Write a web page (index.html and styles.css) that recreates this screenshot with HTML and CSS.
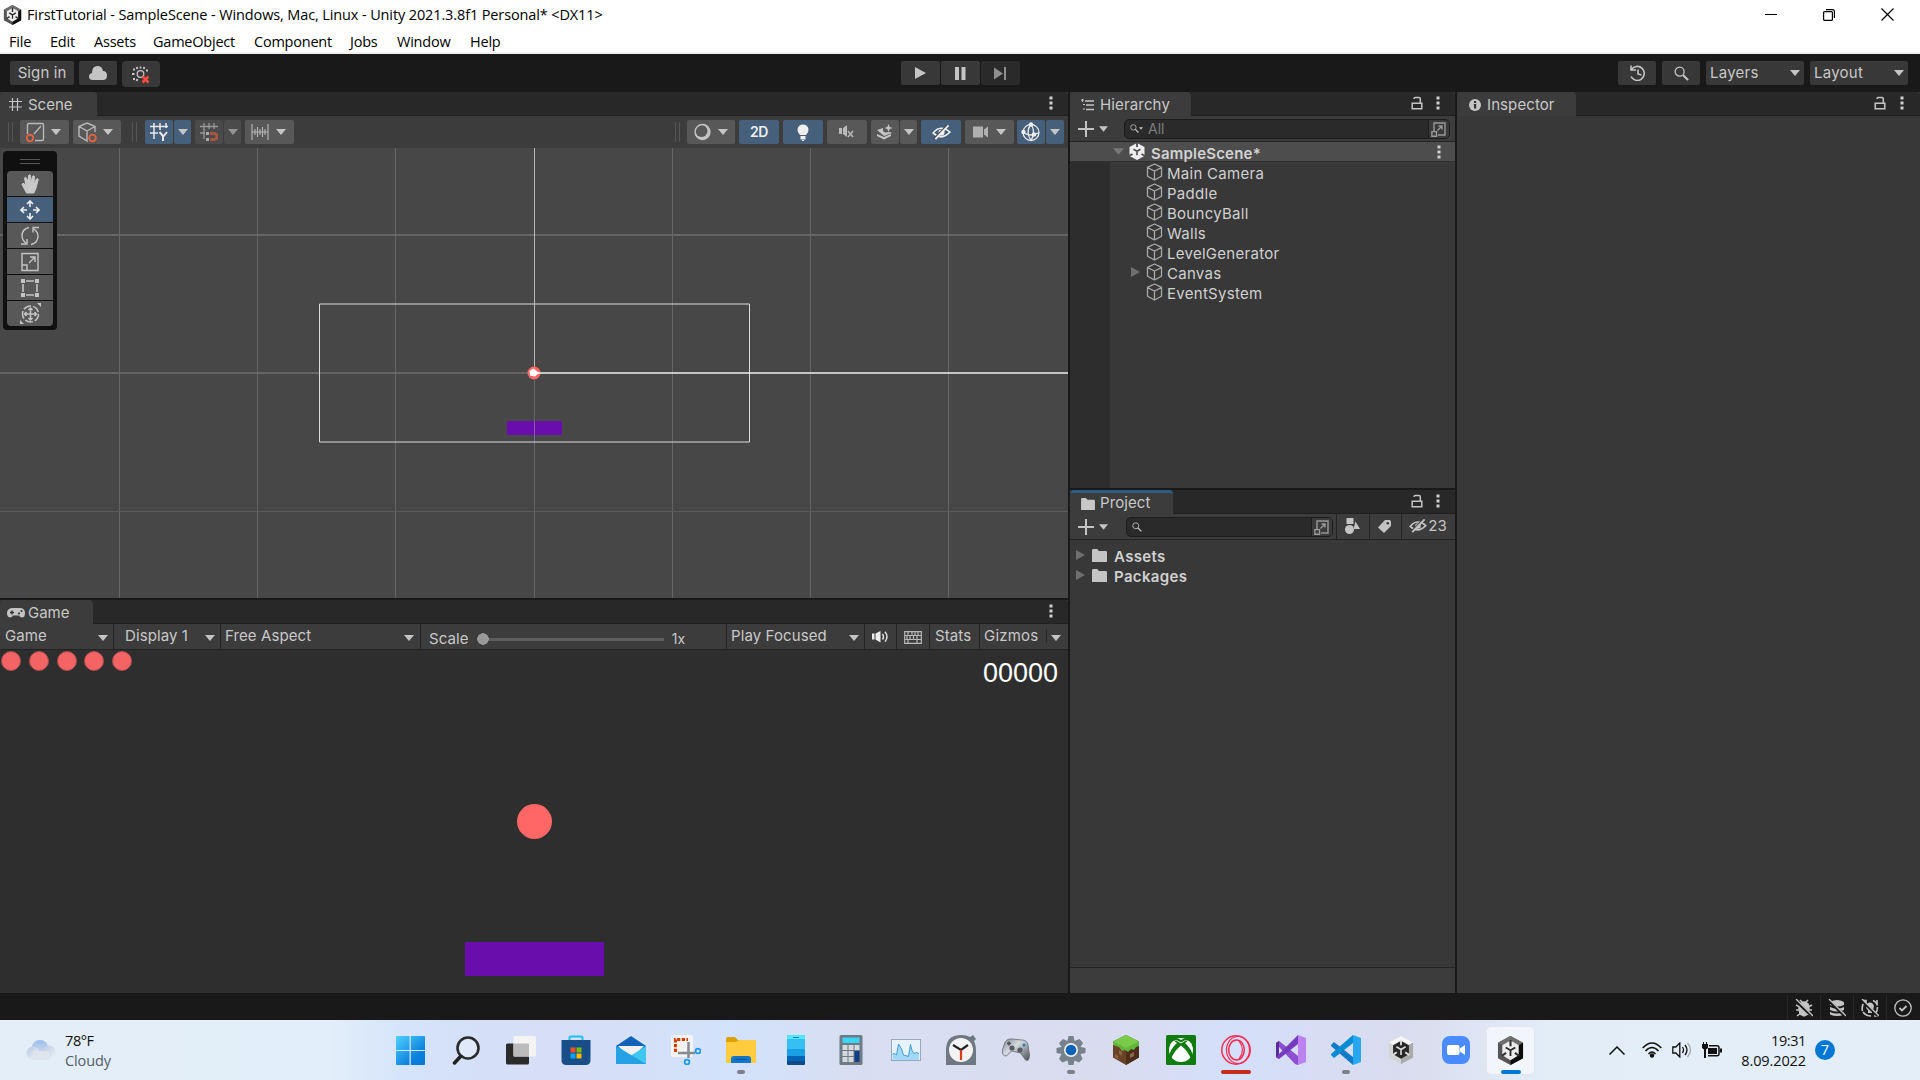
FILE: index.html
```html
<!DOCTYPE html>
<html lang="en">
<head>
<meta charset="utf-8">
<title>FirstTutorial - SampleScene - Unity</title>
<link rel="stylesheet" href="styles.css">
</head>
<body>
<svg class="sprite" aria-hidden="true">
  <defs>
    <symbol id="caret" viewBox="0 0 10 6"><path d="M0 0h10L5 6z" fill="currentColor"/></symbol>
    <symbol id="kebab" viewBox="0 0 4 14"><path d="M.5.5h3v3h-3zM.5 5.5h3v3h-3zM.5 10.5h3v3h-3z" fill="currentColor"/></symbol>
    <symbol id="lock" viewBox="0 0 12 14"><path d="M1.2 7.2h9.6v5.6H1.2zM9.3 7V2.8Q9.3 1.5 8 1.5H4.2Q3 1.5 3 3" fill="none" stroke="currentColor" stroke-width="1.5"/></symbol>
    <symbol id="plus" viewBox="0 0 16 16"><path d="M8 0v16M0 8h16" stroke="currentColor" stroke-width="2"/></symbol>
    <symbol id="folder" viewBox="0 0 15 13"><path d="M0 1.2Q0 0 1.2 0h4l1.8 2h6.8Q15 2 15 3.2V13H0z" fill="currentColor"/></symbol>
    <symbol id="cube" viewBox="0 0 17 18"><path d="M8.5 1l7 3.4v8.800l-7 3.800-7-3.800V4.400zM1.500 4.600l7 3.400 7-3.400M8.500 8v9" fill="none" stroke="currentColor" stroke-width="1.300" stroke-linejoin="round"/></symbol>
    <symbol id="expand" viewBox="0 0 16 16"><path d="M3 10V2h11v12H7M.9 10.6h4.600v4.600H.9zM6.500 9.500L11 5M7.500 5H11v3.500" fill="none" stroke="currentColor" stroke-width="1.400"/></symbol>
    <symbol id="search" viewBox="0 0 16 16"><circle cx="6" cy="6" r="4.800" fill="none" stroke="currentColor" stroke-width="1.400"/><path d="M9.500 9.500L15 15" stroke="currentColor" stroke-width="2.200"/></symbol>
    <symbol id="unity" viewBox="0 0 28 30"><path d="M14 0l13 7v16l-13 7L1 23V7z" fill="#555"/><path d="M14 0l13 7-13 8L1 7z" fill="#6e6e6e"/><path d="M14 15l13-8v16l-13 7z" fill="#0c0c0c"/><path d="M14 4.500l8.500 5v10.500L14 25l-8.500-5V9.500z" fill="#ececec"/><path d="M14 4v6.500M5 20.500l4.500-3M23 20.500l-4.500-3" stroke="#333" stroke-width="2.200"/><path d="M14 14.800v6M14 14.800l-5-3M14 14.800l5-3" stroke="#2a2a2a" stroke-width="1.900"/></symbol>
    <symbol id="eyeoff" viewBox="0 0 20 16"><path d="M1 8.500Q9-1 19 7.500 10 17 1 8.500z" fill="none" stroke="currentColor" stroke-width="1.800"/><circle cx="10" cy="8" r="3.200" fill="currentColor"/><path d="M16.200 0L2.200 14" stroke="#46494d" stroke-width="1.500"/><path d="M17.500 .5L3.500 15" stroke="currentColor" stroke-width="2"/></symbol>
  </defs>
</svg>

<header class="titlebar">
  <svg class="app-icon" width="19" height="20"><use href="#unity"/></svg>
  <span class="title">FirstTutorial - SampleScene - Windows, Mac, Linux - Unity 2021.3.8f1 Personal* &lt;DX11&gt;</span>
  <div class="window-controls">
    <svg width="12" height="12"><path d="M0 5.500h12" stroke="#000"/></svg>
    <svg width="12" height="12" fill="none" stroke="#000" stroke-width="1.200"><rect x=".6" y="2.600" width="8.800" height="8.800" rx="1"/><path d="M3 .6h6.400q2 0 2 2V9"/></svg>
    <svg width="13" height="13"><path d="M.5.5l12 12M12.500.5l-12 12" stroke="#000" stroke-width="1.200"/></svg>
  </div>
</header>

<nav class="menubar">
  <span>File</span><span>Edit</span><span>Assets</span><span>GameObject</span><span>Component</span><span>Jobs</span><span>Window</span><span>Help</span>
</nav>

<div class="app-toolbar">
  <div class="tb-group account">
    <button class="tb-btn signin">Sign in</button>
    <button class="tb-btn w38"><svg width="18" height="14"><path d="M4 14Q0 14 0 10.500 0 7.500 3 7 3 0 8.500 0 13 0 14 5q4 0 4 4.500T14 14z" fill="#c4c4c4"/></svg></button>
    <button class="tb-btn w38 tall"><svg width="19" height="19"><circle cx="8.500" cy="9" r="3.300" fill="none" stroke="#c4c4c4" stroke-width="1.300"/><path d="M1 4.500h2M0 9h2.500M1 14h2M4.500 2l1 2M12.500 2l-1 2M4.500 16l1-2M14 5.500h2M8.500 1.500v2" stroke="#c4c4c4" stroke-width="1.800"/><path d="M10.500 11.500l6 6M16.500 11.500l-6 6" stroke="#ff4b3e" stroke-width="2.600"/></svg></button>
  </div>
  <div class="tb-group playback">
    <button class="tb-btn w39"><svg width="11" height="12"><path d="M0 0l11 6-11 6z" fill="#c4c4c4"/></svg></button>
    <button class="tb-btn w39"><svg width="11" height="13"><path d="M0 0h4v13H0zM6.500 0h4v13h-4z" fill="#c4c4c4"/></svg></button>
    <button class="tb-btn w39 off"><svg width="12" height="13"><path d="M0 .5l9 6-9 6zM10 0h2v13h-2z" fill="#8f8f8f"/></svg></button>
  </div>
  <div class="tb-group views">
    <button class="tb-btn w38"><svg width="17" height="16" fill="none" stroke="#c4c4c4" stroke-width="1.600"><path d="M2.500 4.500A7 7 0 1 1 2 11.500M2 .5v4.500h5M9 4.500V9l3.500 1"/></svg></button>
    <button class="tb-btn w38"><svg width="15" height="15" class="lit"><use href="#search"/></svg></button>
    <button class="tb-btn select">Layers<svg class="caret"><use href="#caret"/></svg></button>
    <button class="tb-btn select">Layout<svg class="caret"><use href="#caret"/></svg></button>
  </div>
</div>

<main class="workspace">
  <div class="column left-column">
    <section class="panel scene-panel">
      <div class="tabs">
        <div class="tab scene-tab"><svg width="13" height="13"><path d="M3.500 0v13M8.500 0v13M0 3.500h13M0 9h13" stroke="#c4c4c4" stroke-width="1.200"/></svg>Scene</div>
        <svg class="kebab end-kebab"><use href="#kebab"/></svg>
      </div>
      <div class="scene-toolbar">
        <i class="grip"></i>
        <button class="st w49 menu"><svg width="20" height="21" fill="none"><path d="M1.500 12V3q0-1.500 1.500-1.500h13Q17.500 1.500 17.500 3v14q0 1.500-1.500 1.500H9M8 12l7-8" stroke="#b8b8b8" stroke-width="1.400"/><circle cx="4" cy="16" r="3.300" stroke="#e8633e" stroke-width="1.800"/></svg><svg class="caret"><use href="#caret"/></svg></button>
        <button class="st w48 menu"><svg width="20" height="21" fill="none"><path d="M9 1l8 3.500V10M9 1L1 4.500V14l8 5V9L1 4.500M9 9l8-4.500" stroke="#b8b8b8" stroke-width="1.400"/><circle cx="14.500" cy="16" r="3.300" stroke="#e8633e" stroke-width="1.800"/></svg><svg class="caret"><use href="#caret"/></svg></button>
        <i class="grip second"></i>
        <div class="split blue"><button class="st w28"><svg width="18" height="20" fill="none" stroke="#e8e8e8"><path d="M4 1v16M10 1v7M16 1v5M0 4.500h18M0 11h8" stroke-width="1.500"/><path d="M9.500 10l3.500 4v5M17 10l-4 5" stroke-width="2"/></svg></button><button class="st w17"><svg class="caret"><use href="#caret"/></svg></button></div>
        <div class="split dim"><button class="st w28"><svg width="18" height="20" fill="none"><path d="M4 1v16M9 1v6M14 1v6M0 4.500h18M0 11h5" stroke="#999" stroke-width="1.300"/><path d="M10 11.500h4q3 0 3 3t-3 3h-4" stroke="#a75642" stroke-width="3"/><path d="M6 11.500h3M6 17.500h3" stroke="#aaa" stroke-width="3"/></svg></button><button class="st w17"><svg class="caret"><use href="#caret"/></svg></button></div>
        <button class="st w49 snap"><svg width="18" height="18"><path d="M1 1v16M17 1v16M4 6v6M6.500 4v10M9 6v6M11.500 4v10M14 6v6M1 9h16" stroke="#b8b8b8" stroke-width="1.100"/></svg><svg class="caret"><use href="#caret"/></svg></button>
        <span class="spring"></span>
        <i class="grip right-grip"></i>
        <button class="st w48"><svg width="18" height="18"><circle cx="8.500" cy="9" r="7.500" fill="#c4c4c4"/><circle cx="7.500" cy="8" r="6" fill="#585858"/><circle cx="8.500" cy="9" r="7.500" fill="none" stroke="#c4c4c4" stroke-width="1.300"/></svg><svg class="caret"><use href="#caret"/></svg></button>
        <button class="st w40 on label2d">2D</button>
        <button class="st w40 on"><svg width="12" height="17" fill="#eee"><path d="M3 11Q0 8 .5 5 1.500.5 6 .5t5.500 4.500Q12 8 9 11zM3.500 12h5v3.500h-5zM5 16h2v1H5z"/></svg></button>
        <button class="st w40"><svg width="16" height="14"><path d="M0 3h3v6H0zM4 3l4-3v12L4 9z" fill="#b8b8b8"/><path d="M9 6l5 6M14 6l-5 6" stroke="#b8b8b8" stroke-width="1.500"/></svg></button>
        <div class="split"><button class="st w28"><svg width="16" height="16"><path d="M0 6l6-2v3l2 1.500 5-.5 2 1-8 3zM0 10l7 3 7-3v2l-7 3.500L0 12z" fill="#c4c4c4"/><path d="M11.500 0l1.200 3 3 1-3 1-1.200 3-1.200-3-3-1 3-1z" fill="#c4c4c4"/></svg></button><button class="st w17"><svg class="caret"><use href="#caret"/></svg></button></div>
        <button class="st w40 on"><svg width="19" height="15"><use href="#eyeoff"/></svg></button>
        <button class="st w49"><svg width="17" height="12"><path d="M0 .5h10v11H0zM11 3.500l4-3v11l-4-3z" fill="#b0b0b0"/></svg><svg class="caret"><use href="#caret"/></svg></button>
        <div class="split blue last"><button class="st w28"><svg width="20" height="20" fill="none" stroke="#e8e8e8" stroke-width="1.300"><circle cx="10" cy="10.500" r="8"/><path d="M10 2q-6 8 0 16.500M2 10.500q8 5 16 0M10 2q5 8 0 16.500"/><g fill="#eee" stroke="none"><circle cx="10" cy="2.500" r="2.200"/><circle cx="2.500" cy="10" r="2.200"/><circle cx="13" cy="12.500" r="2.200"/></g></svg></button><button class="st w18"><svg class="caret"><use href="#caret"/></svg></button></div>
      </div>
      <div class="scene-view">
        <svg class="scene-canvas" width="1068" height="450">
          <g stroke="#656565" shape-rendering="crispEdges">
            <path d="M119.500 0v450M672.500 0v450M810.500 0v450M948.500 0v450M534.500 225v225"/>
            <path d="M257.500 0v450M395.500 0v450M0 87h1068M0 225h534" stroke-width="1.500"/>
            <path d="M0 363.500h1068" stroke="#5b5b5b"/>
          </g>
          <path d="M319.500 156h430v138h-430z" fill="none" stroke="#dcdcdc"/>
          <rect x="507" y="273" width="55" height="14" fill="#6a0dad"/>
          <path d="M534.500 0v220" stroke="#b9b9b9" shape-rendering="crispEdges"/>
          <path d="M534.500 273v20" stroke="#8a5ab0"/>
          <circle cx="534" cy="225" r="6.500" fill="#ff6666"/>
          <path d="M534 225h534" stroke="#eee" stroke-width="1.500"/>
          <path d="M529.500 223l4-2.500 5.500 4.500-4 3.500-5-1z" fill="#fff"/>
        </svg>
        <div class="tools">
          <i class="tools-grip"></i>
          <button><svg width="19" height="20"><path d="M5.500 19L1 10.500q0-1.500 2-1L5 12 3.500 4q1-1.500 2 0L7.500 9V1.500q1-1.500 2 0L10 9l1.500-6.500q1-1.500 2 0L13 10l2.500-5q1.500-1 1.800.5L15 14l-2 5z" fill="#c8c8c8" stroke="#c8c8c8"/></svg></button>
          <button class="on"><svg width="20" height="20" fill="none" stroke="#eee" stroke-width="1.600"><path d="M10 7V1M7 4l3-3 3 3M10 13v6M7 16l3 3 3-3M7 10H1M4 7l-3 3 3 3M13 10h6M16 7l3 3-3 3"/></svg></button>
          <button><svg width="20" height="20" fill="none" stroke="#c4c4c4" stroke-width="1.400"><path d="M9 1.500Q2 3 2 10q0 4 4 7M1 18h6v-5M11 18.500q7-1.500 7-8.500 0-4-4-7M19 1.500h-6v5"/></svg></button>
          <button><svg width="20" height="20" fill="none" stroke="#c4c4c4" stroke-width="1.400"><path d="M2 1.500h16v17H2zM2 13h5v5.500M9 11l6-6M10 5h5v5"/></svg></button>
          <button><svg width="20" height="20" stroke="#c4c4c4" stroke-width="1.600"><path d="M6 3h8M6 17h8M3 6v8M17 6v8"/><path d="M1 1h4v4H1zM15 1h4v4h-4zM1 15h4v4H1zM15 15h4v4h-4z" fill="#c4c4c4" stroke="none"/></svg></button>
          <button><svg width="21" height="21" fill="none" stroke="#c4c4c4" stroke-width="1.500"><circle cx="10.500" cy="11" r="8" stroke-dasharray="8 2"/><path d="M10.500 5v12M4.500 11h12M8.500 7l2-2 2 2M8.500 15l2 2 2-2M6.500 9l-2 2 2 2M14.500 9l2 2-2 2"/><path d="M17 0h4v4zM0 17v4h4z" fill="#c4c4c4" stroke="none"/></svg></button>
        </div>
      </div>
    </section>

    <section class="panel game-panel">
      <div class="tabs">
        <div class="tab game-tab"><svg width="18" height="11"><path d="M4.500 1h9Q18 1.500 18 6t-3 4.500q-2 0-3-2H6q-1 2-3 2Q0 10 0 6t4.500-5z" fill="#c4c4c4"/><path d="M3 5.500h4M5 3.500v4" stroke="#333" stroke-width="1.400"/><circle cx="12" cy="6.500" r="1.100" fill="#333"/><circle cx="14.500" cy="4" r="1.100" fill="#333"/></svg>Game</div>
        <svg class="kebab end-kebab"><use href="#kebab"/></svg>
      </div>
      <div class="game-toolbar">
        <span class="g-mode">Game<svg class="caret"><use href="#caret"/></svg></span>
        <span class="g-display">Display 1<svg class="caret"><use href="#caret"/></svg></span>
        <span class="g-aspect">Free Aspect<svg class="caret"><use href="#caret"/></svg></span>
        <span class="g-scale">Scale<i class="slider"></i><b>1x</b></span>
        <span class="g-play">Play Focused<svg class="caret"><use href="#caret"/></svg></span>
        <span class="g-icon"><svg width="17" height="12"><path d="M0 2.500h2.500v6H0zM3.500 2.500L8.500 0v11.500l-5-3z" fill="#eee"/><path d="M10.500 3q2 3 0 5.500M13 .8q4 5 0 10" stroke="#ddd" stroke-width="1.500" fill="none"/></svg></span>
        <span class="g-icon"><svg width="18" height="13" fill="none" stroke="#b8b8b8" stroke-width="1.200"><path d="M.7.7h16.600v11.600H.7zM1 4.500h16M1 8.500h16M4 1v3.500M8 1v3.500M11 1v3.500M14 1v3.500M3 5v3.500M6 5v3.500M9.500 5v3.500M13 5v3.500M4 9v3.500M13 9v3.500"/></svg></span>
        <span class="g-stats">Stats</span>
        <span class="g-gizmos">Gizmos<i></i><svg class="caret"><use href="#caret"/></svg></span>
      </div>
      <div class="game-view">
        <div class="hud">
          <div class="lives"><i></i><i></i><i></i><i></i><i></i></div>
          <div class="score">00000</div>
        </div>
        <div class="ball"></div>
        <div class="paddle"></div>
      </div>
    </section>
  </div>

  <div class="column mid-column">
    <section class="panel hierarchy-panel">
      <div class="tabs">
        <div class="tab hier-tab"><svg width="14" height="12"><path d="M4 2h9M5 6h8M5 10.500h8" stroke="#c4c4c4" stroke-width="1.300"/><path d="M0 1h3M1.500 0v3M2 5.500h2M2 10h2" stroke="#c4c4c4"/></svg>Hierarchy</div>
        <svg class="lock"><use href="#lock"/></svg><svg class="kebab"><use href="#kebab"/></svg>
      </div>
      <div class="list-toolbar">
        <svg class="plus"><use href="#plus"/></svg><svg class="caret"><use href="#caret"/></svg>
        <div class="searchbox hier-search"><svg width="9" height="9"><use href="#search"/></svg><svg class="mini"><use href="#caret"/></svg><span>All</span><div class="picker"><svg width="16" height="16"><use href="#expand"/></svg></div></div>
      </div>
      <div class="scene-row"><svg class="tri-down"><use href="#caret"/></svg>
        <svg width="16" height="17"><path d="M8 0l7.500 4v9L8 17 .5 13V4z" fill="#eee"/><path d="M8 8.200v4M8 8.200L4.500 6.300M8 8.200l3.500-1.900" stroke="#4d4d4d" stroke-width="1.600"/><path d="M8 0v4M0 13l3.500-2M16 13l-3.500-2" stroke="#4d4d4d" stroke-width="1.800"/></svg>
        <span>SampleScene*</span><svg class="kebab"><use href="#kebab"/></svg></div>
      <div class="tree">
        <div class="gutter"></div>
        <ul class="objects">
          <li><svg><use href="#cube"/></svg><span>Main Camera</span></li>
          <li><svg><use href="#cube"/></svg><span>Paddle</span></li>
          <li><svg><use href="#cube"/></svg><span>BouncyBall</span></li>
          <li><svg><use href="#cube"/></svg><span>Walls</span></li>
          <li><svg><use href="#cube"/></svg><span>LevelGenerator</span></li>
          <li class="parent"><svg><use href="#cube"/></svg><span>Canvas</span></li>
          <li><svg><use href="#cube"/></svg><span>EventSystem</span></li>
        </ul>
      </div>
    </section>
    <section class="panel project-panel">
      <div class="tabs">
        <div class="tab proj-tab focused"><svg width="14" height="12"><use href="#folder"/></svg><span>Project</span></div>
        <svg class="lock"><use href="#lock"/></svg><svg class="kebab"><use href="#kebab"/></svg>
      </div>
      <div class="list-toolbar project-toolbar">
        <svg class="plus"><use href="#plus"/></svg><svg class="caret"><use href="#caret"/></svg>
        <div class="searchbox proj-search"><svg width="10" height="10"><use href="#search"/></svg><div class="picker"><svg width="16" height="16"><use href="#expand"/></svg></div></div>
        <span class="p-cell p-first"><svg width="15" height="17" fill="#c4c4c4"><path d="M1.500 0h7v6h-7zM10.500 3.500L15 11H8.500z"/><circle cx="4.500" cy="11.500" r="4.500"/></svg></span>
        <span class="p-cell p-tag"><svg width="13" height="13"><path d="M7 0h4.500Q13 0 13 1.500V6l-7 7-6-5.500z" fill="#c4c4c4"/><circle cx="9.800" cy="3.200" r="1.300" fill="#3c3c3c"/></svg></span>
        <span class="p-cell p-hidden"><svg width="18" height="14"><use href="#eyeoff"/></svg>23</span>
      </div>
      <ul class="assets">
        <li><svg width="15" height="13"><use href="#folder"/></svg><span>Assets</span></li>
        <li><svg width="15" height="13"><use href="#folder"/></svg><span>Packages</span></li>
      </ul>
      <div class="project-footer"></div>
    </section>
  </div>

  <section class="panel inspector-panel">
    <div class="tabs">
      <div class="tab insp-tab"><svg width="12" height="12"><circle cx="6" cy="6" r="6" fill="#c4c4c4"/><path d="M5 2h2.200v2H5zM4.500 5h2.700v4.500H5V6.200z" fill="#333"/></svg>Inspector</div>
      <svg class="lock"><use href="#lock"/></svg><svg class="kebab"><use href="#kebab"/></svg>
    </div>
  </section>
</main>

<footer class="statusbar">
  <span><svg width="18" height="18"><path d="M5 5q4-4 8 0l1 4-1 6-4 2-4-2-1-6zM5 1l3 3M13 1l-3 3M1 6l4 2M1 11h4M2 17l4-3M17 6l-4 2M17 11h-4M16 17l-4-3" fill="#c4c4c4" stroke="#c4c4c4" stroke-width="1.500"/><path d="M0 1l17 16" stroke="#191919" stroke-width="3"/><path d="M1 0l17 17" stroke="#c4c4c4" stroke-width="1.300"/></svg></span>
  <span><svg width="18" height="18"><path d="M2 3q7-4 14 0v3q-7 3-14 0zM2 8q7 3 14 0v3q-7 3-14 0zM2 13q7 3 14 0v2.500q-7 3-14 0z" fill="#c4c4c4"/><path d="M0 1l17 16" stroke="#191919" stroke-width="3"/><path d="M1 0l17 17" stroke="#c4c4c4" stroke-width="1.300"/></svg></span>
  <span><svg width="18" height="18"><path d="M1.500 12Q0 7 4 2.500M12 1.500q3 1 4.500 5M2 13q3 4 8 4M16.500 8q0 4-2 6M1 1.500h4v4M16 1v4M13 17h4" fill="none" stroke="#c4c4c4" stroke-width="1.600"/><path d="M5 7q1-3.500 4-3.500T13 7q0 3-2 4v3H7v-3Q5 10 5 7z" fill="#c4c4c4"/><path d="M0 1l17 16" stroke="#191919" stroke-width="2.500"/><path d="M1 0l17 17" stroke="#c4c4c4" stroke-width="1.300"/></svg></span>
  <span><svg width="18" height="18" fill="none" stroke="#c4c4c4"><circle cx="9" cy="9" r="8.200" stroke-width="1.300"/><path d="M5.500 9L8 11.500 12.500 7" stroke-width="1.800"/></svg></span>
</footer>

<div class="taskbar">
  <div class="weather">
    <svg width="30" height="20"><defs><linearGradient id="cl" x2="0" y2="1"><stop stop-color="#9bbcec"/><stop offset="1" stop-color="#dce3ee"/></linearGradient><linearGradient id="cl2" x2="1" y2="1"><stop stop-color="#b5c9e4"/><stop offset="1" stop-color="#f2f3f6"/></linearGradient></defs><circle cx="14" cy="8.500" r="8.500" fill="url(#cl)"/><circle cx="7" cy="13" r="6.500" fill="url(#cl2)"/><circle cx="23" cy="12.500" r="7" fill="url(#cl2)"/><path d="M7 11h16v9H7z" fill="#dfe5ee"/></svg>
    <div><p>78°F</p><p class="muted">Cloudy</p></div>
  </div>
  <div class="apps">
    <span><svg width="30" height="30"><defs><linearGradient id="win" gradientUnits="userSpaceOnUse" x1="0" y1="0" x2="28" y2="30"><stop stop-color="#4fd3ff"/><stop offset=".7" stop-color="#0d83de"/><stop offset="1" stop-color="#0078d4"/></linearGradient></defs><path d="M0 2q0-1 1-1h12.500v14H0zM14.800 1H28q1 0 1 1v13H14.800zM0 16h13.500v14H1q-1 0-1-1zM14.800 16H29v13q0 1-1 1H14.800z" fill="url(#win)"/></svg></span>
    <span><svg width="30" height="30"><circle cx="17" cy="13" r="10.500" fill="#f6f8fc" fill-opacity=".35" stroke="#2b2b2b" stroke-width="2.600"/><path d="M9.500 21.500L3.500 28" stroke="#222" stroke-width="3.500" stroke-linecap="round"/></svg></span>
    <span><svg width="30" height="30"><rect y="8.500" width="23" height="21" rx="1.500" fill="#2b2b2b"/><rect x="7.500" y="1" width="22.500" height="20.500" rx="1.500" fill="#f4f4f4"/><path d="M7.500 8.500H23v13H7.500z" fill="#bcbcbc"/></svg></span>
    <span><svg width="30" height="30"><path d="M8.500 7V3q0-1.500 1.500-1.500h10q1.500 0 1.500 1.500v4" fill="none" stroke="#22c1f5" stroke-width="2"/><path d="M.5 5h29v20q0 5-5 5h-19q-5 0-5-5z" fill="#184f8b"/><path d="M9.500 12.500h5v5h-5z" fill="#f25022"/><path d="M15.500 12.500h5v5h-5z" fill="#7fba00"/><path d="M9.500 18.500h5v5h-5z" fill="#00a4ef"/><path d="M15.500 18.500h5v5h-5z" fill="#ffb900"/></svg></span>
    <span><svg width="30" height="30"><path d="M0 11L15 1l15 10v5H0z" fill="#0f64b7"/><path d="M2 11h26L15 24z" fill="#f1f1f1"/><path d="M0 11l15 9.500V29H0z" fill="#1d9ae0"/><path d="M30 11L15 20.500 8 29h22z" fill="#40c7f0"/><path d="M15 20L30 29H0V11z" fill="#25a2e5"/></svg></span>
    <span><svg width="30" height="30"><rect width="22" height="22" rx="2" fill="#f4f3f2"/><path d="M4.500 17V4.500H17" fill="none" stroke="#d83b01" stroke-width="3" stroke-dasharray="3.200 1.500"/><path d="M17.500 7v16M7 18h17" stroke="#858a90" stroke-width="2.500"/><circle cx="27" cy="16" r="2.400" fill="none" stroke="#1e9be9" stroke-width="1.800"/><circle cx="16" cy="27" r="2.400" fill="none" stroke="#1e9be9" stroke-width="1.800"/></svg></span>
    <span class="run"><svg width="30" height="30"><path d="M0 4q0-2 2-2h7l3 3h18v10H0z" fill="#dfa006"/><path d="M0 7h10l3-2h17v22q0 1-1 1H1q-1 0-1-1z" fill="#ffcb3f"/><path d="M5 28v-4q0-3 3-3h14q3 0 3 3v4z" fill="#1377c8"/><path d="M9 24.500h12" stroke="#0b5394"/></svg></span>
    <span><svg width="30" height="30"><rect x="6" width="18" height="30" rx="1.500" fill="#1a9fe5"/><path d="M6 1.500Q6 0 7.500 0h15Q24 0 24 1.500V14H6z" fill="#36bff2"/><path d="M6 4V1.500Q6 0 7.500 0h15Q24 0 24 1.500V4z" fill="#50e6ff"/><path d="M6 21h18v5H6z" fill="#0364b8"/><path d="M6 26h18v2.500Q24 30 22.500 30h-15Q6 30 6 28.500z" fill="#114a8b"/><path d="M12 2.500h6" stroke="#1489b4"/></svg></span>
    <span><svg width="30" height="30"><rect x="3.500" width="23" height="30" rx="1.500" fill="#6f7a84"/><path d="M6.500 2.500h17V8h-17z" fill="#3bd5f5"/><path d="M6.500 10h5v5h-5zM12.500 10h5v5h-5zM18.500 10h5v5h-5zM6.500 16h5v5h-5zM12.500 16h5v5h-5zM6.500 22h5v5h-5zM12.500 22h5v5h-5z" fill="#d4dade"/><path d="M18.500 16h5v11h-5z" fill="#123f85"/></svg></span>
    <span><svg width="30" height="30"><rect x=".5" y="4.500" width="29" height="21" fill="#e8f2fa" stroke="#9ba8b5"/><path d="M1.500 25V19l2-.5 2 1.500 2-11 3 5 2 6 5 1.500 2-12 1.500 6 2 3 2.500-1 2.500 1V25z" fill="#a2d8f8"/><path d="M1.500 19l2-.5 2 1.500 2-11 3 5 2 6 5 1.500 2-12 1.500 6 2 3 2.500-1 2.500 1" fill="none" stroke="#3d9ddb"/></svg></span>
    <span><svg width="30" height="30"><path d="M0 30V15Q0 0 15 0t15 15v15zM24 2l3-2 3 4-2 2z" fill="#6d7882"/><circle cx="15" cy="15" r="12" fill="#f3f3f3"/><path d="M7 10l8 5 7-5" fill="none" stroke="#222" stroke-width="2.200"/><path d="M15 15v10" stroke="#dd3b17" stroke-width="2.200"/></svg></span>
    <span><svg width="30" height="30"><defs><linearGradient id="pad" x2="1" y2="1"><stop stop-color="#7e858c"/><stop offset=".4" stop-color="#d5dbe0"/><stop offset="1" stop-color="#4a4f55"/></linearGradient></defs><path d="M4 7q3-4 7-3l10 1q5 0 6 5l1.500 10q0 7-4 5l-5-7-9-2-5 5q-5 0-4-6z" fill="url(#pad)" stroke="#656c74" stroke-width=".8"/><circle cx="11" cy="13" r="2.600" fill="#555c64"/><circle cx="19" cy="15" r="2.600" fill="#555c64"/><circle cx="23" cy="10" r="1.500" fill="#3177b9"/><path d="M6 8.500h4M8 6.500v4" stroke="#474c52" stroke-width="1.500"/></svg></span>
    <span class="run"><svg width="30" height="30"><path d="M11.500 6l1-5h5l1 5 5-2 3.500 4-2.500 4 5 1v5l-5 1 2 5-3.500 3.500-4.500-2-1 4.500h-5l-1-4.500-5 2L3 24l2.500-5-5-1v-5l5-1L3 8l4-4z" fill="#77818b"/><circle cx="15" cy="15" r="7" fill="#eee"/><circle cx="15" cy="15" r="5.300" fill="#0c63b8"/></svg></span>
    <span><svg width="30" height="30"><path d="M15 0l13 6.500v16L15 30 2 22.500v-16z" fill="#6a4329"/><path d="M15 13v17l13-7.500v-16z" fill="#4b2d1b"/><path d="M15 0l13 6.500V11l-3 1-2 3-3-1-3 3-3-2-3 1-3-4-6-2V6.500z" fill="#63b53b"/><path d="M15 0l13 6.500L15 13 2 6.500z" fill="#7acb4c"/><path d="M8 15l3 2v4l-3-2zM19 19l4-2v4l-4 2zM4 19l3 2v3l-3-2z" fill="#916444"/></svg></span>
    <span><svg width="30" height="30"><rect width="30" height="30" rx="1.500" fill="#107c10"/><circle cx="15" cy="15" r="12" fill="#fff"/><path d="M5 7Q8 3 15 7.500 22 3 25 7L22 3.500Q18 2.500 15 5 12 2.500 8 3.500z" fill="#107c10"/><path d="M15 10.500Q7 17 5 24.500L3 22Q4 14 11 8L7 5q4 0 8 3.500Q19 5 23 5l-4 3q7 6 8 14l-2 2.500Q23 17 15 10.500z" fill="#107c10"/></svg></span>
    <span class="run red"><svg width="30" height="30" fill="none" stroke="#f52d52"><circle cx="15" cy="15" r="14.200" stroke-width="1.500"/><ellipse cx="17" cy="15" rx="11.500" ry="13.500" stroke-width="1.200"/><ellipse cx="15.500" cy="15" rx="7.800" ry="10" stroke-width="1.500"/><path d="M18 6q7 9 0 18" stroke-width="1.200"/></svg></span>
    <span><svg width="30" height="30"><path d="M0 8l3-2 19 15V30l-3-1L3 12v7l-3 4z" fill="#8d4ed0"/><path d="M0 8l3-2v18l-3-2z" fill="#5b2a9d"/><path d="M3 24l19-15V0L0 22z" fill="#763bc0"/><path d="M22 0l8 3v24l-8 3z" fill="#bd82f1"/></svg></span>
    <span class="run"><svg width="30" height="30"><path d="M0 10l3-3 19 15v8L0 11z" fill="#1279c4"/><path d="M0 20l3 3L22 8V0L0 19z" fill="#078bd2"/><path d="M22 0l8 3v24l-8 3z" fill="#27a7ef"/></svg></span>
    <span><svg width="26" height="28" viewBox="0 0 28 30"><path d="M14 0l13 7v16l-13 7L1 23V7z" fill="#d4d4d4"/><path d="M14 0l13 7-13 7L1 7z" fill="#f6f6f6"/><path d="M14 14l13-7v16l-13 7z" fill="#aaa"/><path d="M14 5l8.500 5v9.500L14 24.500l-8.500-5V10z" fill="#272727"/><path d="M14 4.500v5.500M5 20.500l4.500-3M23 20.500l-4.500-3" stroke="#ddd" stroke-width="2"/><path d="M14 14.500v6M14 14.500l-5-3M14 14.500l5-3" stroke="#ddd" stroke-width="1.700"/></svg></span>
    <span><svg width="30" height="30"><rect x="1" y="1" width="28" height="28" rx="8" fill="#4a8cff"/><rect x="6" y="10" width="12.500" height="10" rx="2" fill="#fff"/><path d="M19 13.500l5-3.500v10l-5-3.500z" fill="#fff"/></svg></span>
    <span class="run active"><svg width="27" height="29"><use href="#unity"/></svg></span>
  </div>
  <div class="tray">
    <svg width="16" height="9"><path d="M.5 8.500L8 1l7.500 7.500" fill="none" stroke="#111" stroke-width="1.500"/></svg>
    <svg class="wifi" width="20" height="16" fill="none" stroke="#111" stroke-width="1.500"><path d="M.7 6Q10-4 19.300 6M3.500 9Q10 2 16.500 9M6.500 12Q10 8 13.500 12"/><circle cx="10" cy="13.500" r="1.500" fill="#111"/></svg>
    <svg class="vol" width="20" height="16" fill="none" stroke="#111" stroke-width="1.300"><path d="M.8 5h3l4-4v14l-4-4h-3zM10.500 5q2 3 0 6M13 3q4 5 0 10"/><path d="M15.500 1q6 7 0 14" stroke="#aaa"/></svg>
    <svg class="bat" width="21" height="17"><path d="M1 2h6v4L5 7.500v8.500H3V7.500L1 6zM2 0h1v3H2zM5 0h1v3H5z" fill="#111"/><path d="M8 3.700h8q2 0 2 2v6q0 2-2 2H7" fill="none" stroke="#111" stroke-width="1.500"/><path d="M7 6h9v6H7zM19 6.500h2v4h-2z" fill="#111"/></svg>
    <div class="clock"><p>19:31</p><p>8.09.2022</p></div>
    <div class="badge">7</div>
  </div>
</div>
</body>
</html>
```
FILE: styles.css
```css
* { box-sizing: border-box; }
html, body { margin: 0; }
body {
  width: 1920px; height: 1080px; overflow: hidden;
  display: flex; flex-direction: column;
  background: #191919; color: #c8c8c8;
  font: 15px/20px Inter, "Liberation Sans", sans-serif;
}
p, ul { margin: 0; padding: 0; list-style: none; }
svg { display: block; flex: none; }
button { border: 0; padding: 0; font: inherit; color: inherit; display: flex; align-items: center; justify-content: center; }
.sprite { position: absolute; width: 0; height: 0; }
.caret { width: 10px; height: 6px; color: #c4c4c4; }
.kebab { width: 4px; height: 14px; color: #d0d0d0; }
.lock { width: 12px; height: 14px; color: #c4c4c4; }
.lit { color: #c4c4c4; }

/* Window frame */
.titlebar { height: 28px; flex: none; background: #fff; color: #000; display: flex; align-items: center; padding: 1px 26px 0 3px; font: 14.500px/20px "Open Sans", sans-serif; }
.title { margin-left: 5px; letter-spacing: -.12px; white-space: nowrap; }
.window-controls { margin-left: auto; display: flex; align-items: center; gap: 46px; }
.menubar { height: 26px; flex: none; background: #fff; border-bottom: 2px solid #f0f0f0; color: #000; padding: 3px 0 0 9px; display: grid; grid-template-columns: 41px 44px 59px 101px 96px 47px 73px 50px; font: 14.500px/21px "Open Sans", sans-serif; letter-spacing: -.22px; }

/* Main toolbar */
.app-toolbar { height: 38px; flex: none; display: grid; grid-template-columns: 901px 1fr 302px; padding: 7px 0 0; }
.tb-group { display: flex; align-items: flex-start; }
.tb-btn { height: 24px; background: #383838; border-radius: 2px; }
.account { gap: 5px; padding-left: 10px; }
.signin { width: 64px; letter-spacing: .1px; }
.w38 { width: 38px; } .w39 { width: 39px; }
.tall { height: 26px; border-radius: 4px; }
.playback { gap: 1px; }
.playback .off { background: #2a2a2a; }
.playback svg { margin-right: 1px; }
.views { gap: 6px; }
.select { width: 98px; justify-content: space-between; padding: 0 4px; letter-spacing: .25px; }

/* Docked panels */
.workspace { height: 901px; flex: none; display: grid; grid-template-columns: 1068px 385px 463px; gap: 2px; }
.column { display: grid; gap: 2px; min-height: 0; }
.left-column { grid-template-rows: 506px 393px; }
.mid-column { grid-template-rows: 396px 503px; }
.panel { background: #383838; display: flex; flex-direction: column; min-height: 0; min-width: 0; }
.tabs { height: 24px; flex: none; background: #282828; display: flex; align-items: center; border-bottom: 1px solid #202020; border-radius: 4px 4px 0 0; padding-right: 15px; }
.tabs .kebab { margin: 0 0 2px 14px; }
.tabs .lock { margin: 0 0 2px auto; }
.tabs .end-kebab { margin-left: auto; }
.inspector-panel .tabs { padding-right: 16px; }
.mid-column .tabs .kebab { margin-left: 13px; }
.tab { height: 24px; align-self: flex-start; display: flex; align-items: center; background: #3c3c3c; border-radius: 4px 4px 0 0; padding-top: 1px; }
.scene-tab { width: 97px; padding-left: 9px; gap: 6px; }
.game-tab { width: 93px; padding-left: 7px; gap: 3px; }
.hier-tab { width: 121px; padding-left: 11px; gap: 5px; letter-spacing: .15px; }
.proj-tab { width: 103px; padding-left: 11px; gap: 5px; letter-spacing: .1px; }
.insp-tab { width: 119px; padding-left: 12px; gap: 6px; letter-spacing: .1px; }
.focused { border-top: 3px solid #2c5d87; padding-top: 0; }
.focused span { margin-top: -2px; }

/* Scene view */
.scene-toolbar { height: 32px; flex: none; background: #3c3c3c; display: flex; align-items: center; padding: 0 4px 0 8px; gap: 4px; }
.grip { width: 5px; height: 20px; border: solid #555; border-width: 0 1px; margin-right: 3px; }
.grip.second { margin-left: 7px; margin-right: 4px; }
.right-grip { margin-right: 3px; }
.spring { flex: 1; }
.st { height: 24px; background: #585858; border-radius: 2px; gap: 6px; color: #eee; }
.st.menu { gap: 5px; padding-right: 3px; }
.st.snap { padding-right: 2px; gap: 7px; }
.w49 { width: 49px; } .w48 { width: 48px; } .w40 { width: 40px; } .w28 { width: 28px; } .w17 { width: 17px; } .w18 { width: 18px; }
.split { display: flex; gap: 1px; }
.split.last { margin-left: -1px; }
.blue .st, .st.on { background: #46607c; }
.dim .st { background: #4b4b4b; }
.dim .caret { opacity: .6; }
.label2d { font-weight: 600; font-size: 14px; letter-spacing: -.3px; }
.scene-view { height: 450px; position: relative; background: #474747; }
.tools { position: absolute; left: 3px; top: 3px; width: 54px; height: 179px; background: #101010; border-radius: 4px; display: flex; flex-direction: column; align-items: center; gap: 1px; }
.tools-grip { height: 5px; width: 20px; border: solid #555; border-width: 1px 0; margin: 8px 0 6px; }
.tools button { width: 46px; height: 25px; background: #585858; }
.tools button.on { background: #46607c; }
.tools button:nth-of-type(1) { border-radius: 4px 4px 0 0; }
.tools button:last-child { border-radius: 0 0 4px 4px; }

/* Game view */
.game-toolbar { height: 26px; flex: none; background: #3c3c3c; border-bottom: 1px solid #232323; display: grid; grid-template-columns: 114px 107px 200px 306px 138px 32px 33px 50px 88px; line-height: 24px; }
.game-toolbar > span { border-right: 1px solid #232323; display: flex; align-items: center; justify-content: space-between; padding: 0 5px 3px 5px; white-space: nowrap; letter-spacing: .1px; }
.game-toolbar .caret { margin-top: 4px; }
.game-toolbar .g-display { padding-left: 11px; }
.game-toolbar .g-aspect { padding-left: 4px; padding-right: 6px; }
.game-toolbar .g-play { padding-left: 4px; }
.game-toolbar .g-scale { justify-content: flex-start; padding: 2px 0 0 8px; }
.g-scale b { font-weight: 400; font-size: 14px; margin-left: 8px; }
.slider { width: 187px; height: 12px; margin-left: 8px; background: radial-gradient(circle at 6px 6px, #999 5.500px, transparent 6px), linear-gradient(#5e5e5e, #5e5e5e) 6px 5px / 181px 3px no-repeat; }
.game-toolbar .g-icon { justify-content: center; padding: 0 0 1px; }
.game-toolbar .g-gizmos { border: 0; letter-spacing: .2px; padding-left: 4px; padding-right: 7px; }
.g-gizmos i { width: 1px; height: 14px; background: #282828; margin-left: 4px; }
.game-view { flex: 1; background: #2e2e2e; display: flex; flex-direction: column; align-items: center; padding-left: 1px; }
.hud { width: 100%; height: 154px; display: flex; justify-content: space-between; padding: 1px 10px 0 0; }
.lives { display: flex; gap: 7.750px; }
.lives i { width: 20px; height: 20px; border-radius: 50%; background: #f56465; border: 1px solid #a94b4c; }
.score { font: 27px/44px "Liberation Sans", sans-serif; color: #fff; }
.ball { width: 35px; height: 35px; border-radius: 50%; background: #ff6666; }
.paddle { width: 139px; height: 34px; margin-top: 103px; background: #6a0dad; }

/* Hierarchy */
.list-toolbar { height: 26px; flex: none; background: #3c3c3c; border-bottom: 1px solid #232323; display: flex; align-items: center; padding: 0 5px 0 8px; color: #c4c4c4; }
.plus { width: 16px; height: 16px; margin-right: 5px; }
.list-toolbar > .caret { width: 9px; margin-right: 1px; }
.searchbox { height: 20px; display: flex; align-items: center; background: #2a2a2a; border: 1px solid #1c1c1c; border-radius: 5px; overflow: hidden; padding-left: 5px; color: #c4c4c4; }
.hier-search { width: 326px; margin-left: 15px; }
.hier-search span { color: #7d7d7d; font-size: 14px; margin-left: 5px; }
.mini { width: 4px; height: 3px; }
.picker { width: 21px; height: 18px; margin-left: auto; background: #3a3a3a; border-left: 1px solid #1c1c1c; display: flex; align-items: center; justify-content: center; color: #999; }
.scene-row { height: 20px; flex: none; background: #4d4d4d; border-bottom: 1px solid #303030; display: flex; align-items: center; padding: 0 14px 0 43px; font-weight: 600; color: #d2d2d2; }
.scene-row span { margin: 5px auto 0 6px; letter-spacing: .2px; }
.tri-down { width: 11px; height: 9px; color: #777; margin-right: 5px; }
.tree { flex: 1; display: flex; }
.gutter { width: 40px; background: #2d2d2d; }
.objects { flex: 1; padding-left: 36px; }
.objects li { height: 20px; display: flex; align-items: center; letter-spacing: .28px; color: #d0d0d0; }
.objects svg { width: 17px; height: 18px; margin-right: 4px; color: #a9a9a9; }
.objects span { padding-top: 4px; }
.parent::before { content: ""; border: solid transparent; border-width: 5px 0 5px 9px; border-left-color: #6f6f6f; margin: 0 6px 0 -15px; }

/* Project */
.project-toolbar { padding: 0; padding-left: 8px; }
.proj-search { width: 207px; margin: 1px 3px 0 17px; }
.p-cell { height: 25px; border-left: 1px solid #232323; display: flex; align-items: center; justify-content: center; padding: 0 2px 1px 0; }
.p-first { width: 33px; }
.p-tag { width: 32px; }
.p-hidden { width: 53px; gap: 1px; padding-right: 0; }
.assets { flex: 1; padding-top: 5px; }
.assets li { height: 20px; display: flex; align-items: center; font-weight: 600; color: #d0d0d0; letter-spacing: .35px; }
.assets li::before { content: ""; border: solid transparent; border-width: 5px 0 5px 9px; border-left-color: #6f6f6f; margin: 0 7px 0 6px; }
.assets span { margin-left: 7px; padding-top: 4px; }
.assets svg { color: #c4c4c4; }
.project-footer { height: 26px; background: #3c3c3c; border-top: 1px solid #232323; }

/* Status bar */
.statusbar { height: 27px; flex: none; display: flex; justify-content: flex-end; padding-right: 1px; }
.statusbar span { width: 33px; height: 25px; margin-top: 2px; border-left: 1px solid #282828; display: flex; align-items: center; justify-content: center; }

/* Windows taskbar */
.taskbar { height: 60px; flex: none; display: grid; grid-template-columns: 383px 1155px 1fr; color: #111; font: 14.500px/20px "Open Sans", sans-serif; background: linear-gradient(90deg, #e3eef8 0, #e2eef9 330px, #d5e3fb 410px, #d6def5 560px, #d3e3fb 730px, #d8def2 860px, #d9dcee 1100px, #d4dffa 1230px, #d9dcee 1400px, #e2edf8 1550px, #e3eef9 1920px); }
.weather { display: flex; align-items: center; padding-left: 26px; gap: 9px; }
.weather div, .clock { padding-top: 1px; letter-spacing: -.1px; }
.weather p:first-child, .clock p:first-child { letter-spacing: -.4px; }
.muted { color: #555c64; }
.apps { display: flex; align-items: center; }
.apps span { width: 55px; height: 60px; display: flex; align-items: center; justify-content: center; position: relative; }
.run::after { content: ""; position: absolute; bottom: 6px; width: 8px; height: 4px; border-radius: 2px; background: #7b8089; }
.run.red::after { width: 30px; background: #c42b1c; }
.run.active::after { width: 20px; background: #0078d4; }
.active::before { content: ""; position: absolute; z-index: 0; inset: 5.500px 3px; background: #f2f5fb; border: 1px solid #e1e6ef; border-radius: 5px; }
.active svg { position: relative; }
.tray { display: flex; align-items: center; padding-left: 71px; }
.wifi { margin-left: 17px; } .vol { margin-left: 10px; } .bat { margin-left: 9px; }
.clock { width: 84px; text-align: right; }
.badge { margin-left: 9px; width: 20px; height: 20px; border-radius: 50%; background: #0078d4; color: #fff; text-align: center; }
```
